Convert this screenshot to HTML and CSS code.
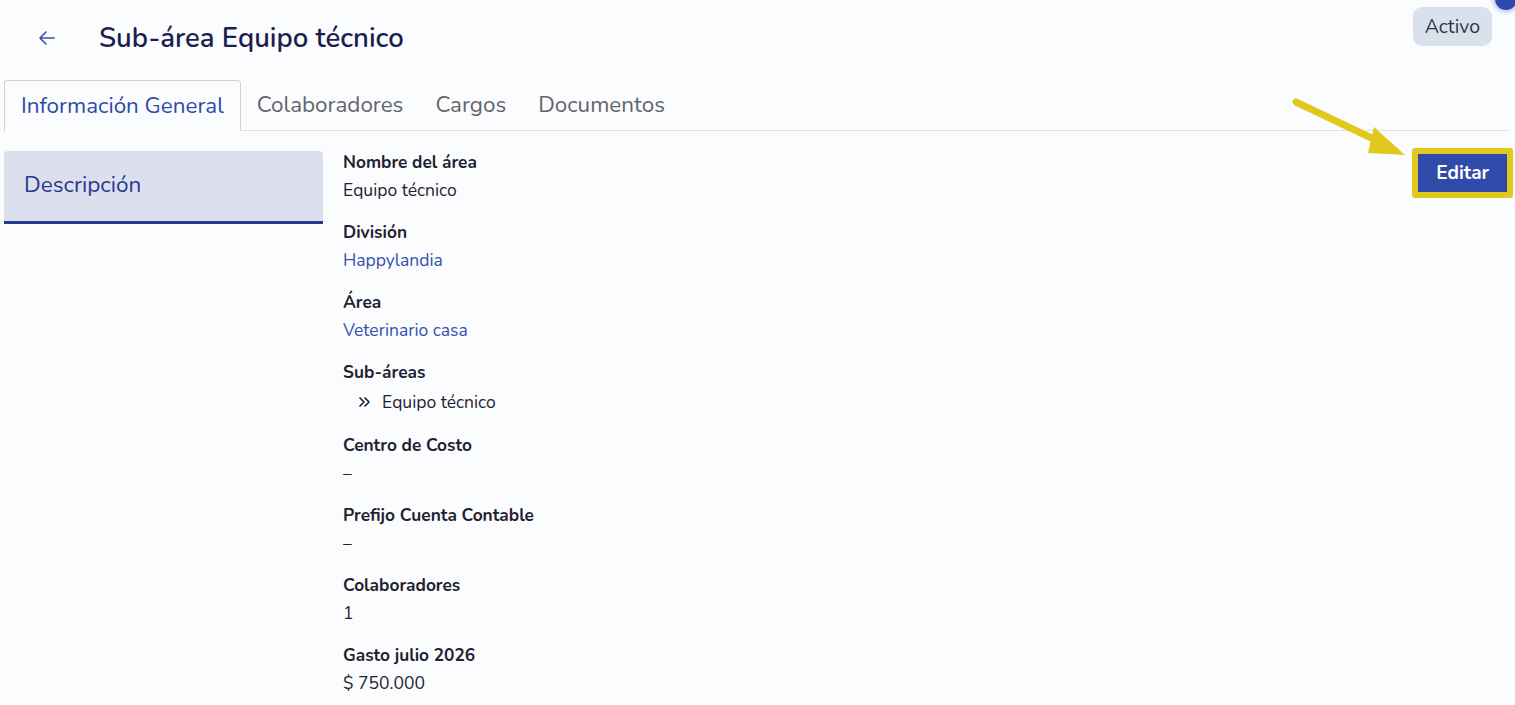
FILE: index.html
```html
<!DOCTYPE html>
<html lang="es">
<head>
<meta charset="utf-8">
<title>Sub-área Equipo técnico</title>
<link rel="stylesheet" href="styles.css">
</head>
<body>
<div class="page">
  <header class="header">
    <button class="back" aria-label="Volver">
      <svg width="20" height="16" viewBox="0 0 20 16"><path d="M17 8H3M9 2L3 8l6 6" fill="none" stroke="#3550b0" stroke-width="1.6" stroke-linecap="round" stroke-linejoin="round"/></svg>
    </button>
    <h1 class="title">Sub-área Equipo técnico</h1>
    <span class="chip">Activo</span>
  </header>
  <span class="dot"></span>
  <nav class="tabs">
    <a class="tab active">Información General</a>
    <a class="tab">Colaboradores</a>
    <a class="tab">Cargos</a>
    <a class="tab">Documentos</a>
  </nav>
  <div class="body">
    <aside class="side">
      <div class="side-item">Descripción</div>
    </aside>
    <section class="details">
      <div class="field"><div class="label">Nombre del área</div><div class="value">Equipo técnico</div></div>
      <div class="field"><div class="label">División</div><div class="value link">Happylandia</div></div>
      <div class="field"><div class="label">Área</div><div class="value link">Veterinario casa</div></div>
      <div class="field"><div class="label">Sub-áreas</div>
        <div class="value sub"><svg width="14" height="12" viewBox="0 0 14 12"><path d="M2 2l4 4-4 4M7 2l4 4-4 4" fill="none" stroke="#1f2230" stroke-width="1.7" stroke-linecap="round" stroke-linejoin="round"/></svg>Equipo técnico</div>
      </div>
      <div class="field"><div class="label">Centro de Costo</div><div class="value">–</div></div>
      <div class="field"><div class="label">Prefijo Cuenta Contable</div><div class="value">–</div></div>
      <div class="field"><div class="label">Colaboradores</div><div class="value">1</div></div>
      <div class="field"><div class="label">Gasto julio 2026</div><div class="value">$ 750.000</div></div>
    </section>
    <div class="actions">
      <span class="highlight"><button class="edit">Editar</button></span>
    </div>
  </div>
  <svg class="pointer" width="130" height="70" viewBox="0 0 130 70">
    <line x1="4" y1="4" x2="90" y2="45" stroke="#e0c81c" stroke-width="7" stroke-linecap="round"/>
    <polygon points="82,29 113,57 76,55" fill="#e0c81c"/>
  </svg>
</div>
</body>
</html>
```
FILE: styles.css
```css
* { box-sizing: border-box; }
html, body { margin: 0; padding: 0; }
body {
  background: #fbfcfe;
  font-family: "Nunito", "Lato", "Noto Sans", sans-serif;
  color: #1f2230;
  width: 1515px;
  height: 705px;
  overflow: hidden;
}
.page { position: relative; padding: 0 2px 0 4px; }
.header {
  display: flex;
  align-items: flex-start;
  height: 80px;
}
.back {
  background: none;
  border: 0;
  padding: 0;
  margin: 30px 0 0 33px;
  width: 20px;
  height: 16px;
  display: flex;
}
.title {
  margin: 20px 0 0 42px;
  font-size: 27.5px;
  font-weight: 600;
  color: #1b1f4f;
  line-height: 36px;
}
.chip {
  margin: 7px 21px 0 auto;
  background: #d9e2ec;
  color: #2b3550;
  border-radius: 9px;
  font-size: 19.5px;
  line-height: 39px;
  padding: 0 12px;
}
.dot {
  position: absolute;
  right: -2px;
  top: -12px;
  width: 22px;
  height: 22px;
  border-radius: 50%;
  background: #2e46b0;
  box-shadow: 0 0 4px 2px rgba(60, 80, 180, 0.35);
}
.tabs {
  display: flex;
  height: 51px;
  border-bottom: 1px solid #e1e3e8;
  margin-right: 3px;
}
.tab {
  font-size: 22.4px;
  color: #62646c;
  padding: 0 16px;
  line-height: 50px;
}
.tab.active {
  color: #2e4aa8;
  border: 1px solid #cfd1d6;
  border-bottom: 0;
  border-radius: 4px 4px 0 0;
  background: #fbfcfe;
  margin-bottom: -1px;
  line-height: 50px;
  height: 51px;
}
.body {
  display: flex;
  padding-top: 20px;
}
.side { width: 319px; flex: none; }
.side-item {
  background: #dce0ee;
  border-bottom: 3px solid #263a8f;
  border-radius: 4px 4px 0 0;
  color: #28398f;
  font-size: 22.5px;
  height: 73px;
  line-height: 68px;
  padding-left: 20px;
}
.details { margin-left: 20px; flex: 1; }
.field { margin-bottom: 14px; }
.label {
  font-weight: 700;
  font-size: 17.3px;
  line-height: 23px;
  color: #1f2230;
}
.value {
  font-size: 17.5px;
  line-height: 33px;
  color: #1f2230;
}
.value.link { color: #3550b0; }
.value.sub {
  display: flex;
  align-items: center;
  gap: 10px;
  padding-left: 15px;
  line-height: 36px;
}
.actions { flex: none; margin-top: -3px; }
.highlight {
  display: inline-block;
  border: 6px solid #e0c81c;
  border-radius: 3px;
}
.edit {
  background: #2f4aa8;
  color: #fff;
  border: 0;
  font-family: inherit;
  font-weight: 700;
  font-size: 19px;
  height: 38px;
  padding: 0 18px;
  display: block;
}
.pointer {
  position: absolute;
  left: 1292px;
  top: 98px;
}
```
